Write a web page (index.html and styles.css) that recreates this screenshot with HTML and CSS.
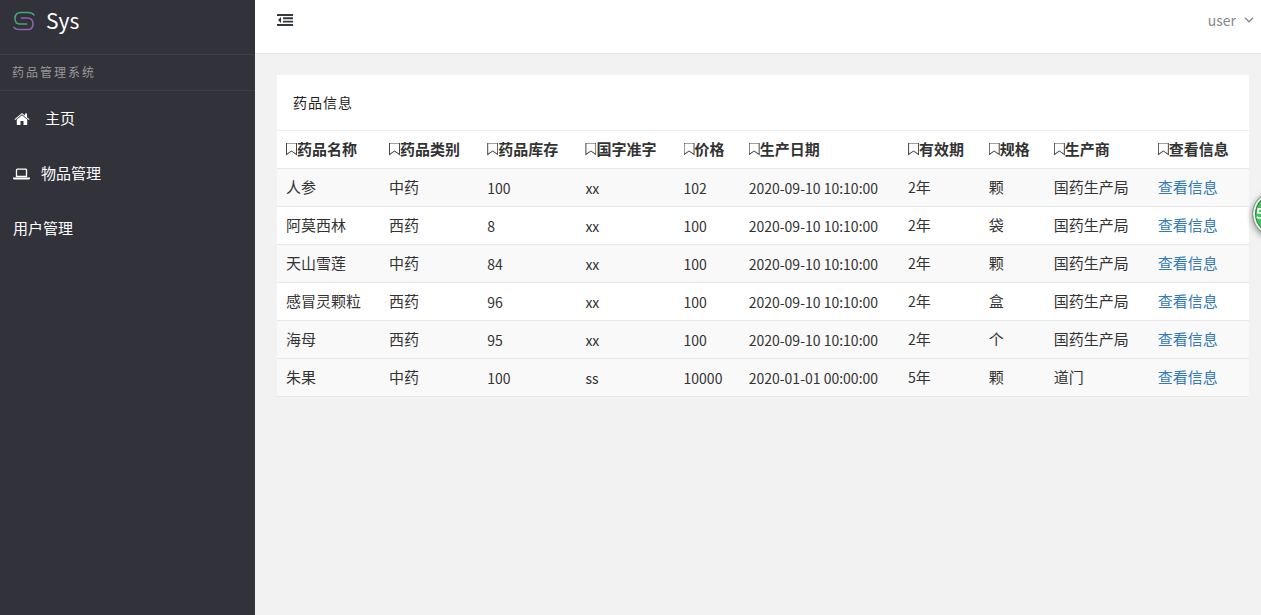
FILE: index.html
```html
<!DOCTYPE html>
<html lang="zh-CN">
<head>
<meta charset="utf-8">
<title>药品管理系统</title>
<link rel="stylesheet" href="styles.css">
</head>
<body>
<div class="app">
  <aside class="sidebar">
    <a class="brand" href="#">
      <svg class="brand-logo" viewBox="0 0 22 20" fill="none" stroke-width="1.600" stroke-linecap="round" aria-hidden="true">
        <path stroke="#46a57a" d="M21 4Q19 1.500 15 1.500H8Q2 1.500 2 7.500T8 13H13.500"/>
        <path stroke="#8b62b4" d="M8.500 7H14Q20 7 20 13T14 18.500H6Q2.500 18.500 1 16.500"/>
      </svg>
      <span>Sys</span>
    </a>
    <div class="side-title">药品管理系统</div>
    <nav class="menu">
      <a class="menu-item" href="#">
        <svg class="icon-home" viewBox="0 0 16 14" fill="#fff" aria-hidden="true"><path d="M8 3.200 13.200 7.500V12.500Q13.200 13 12.700 13H9.500V9H6.500V13H3.300Q2.800 13 2.800 12.500V7.500Z"/><path d="M8 1 11 3.500V1.500H13V5.200L15.500 7.300 14.800 8 8 2.300 1.200 8 .5 7.300Z"/></svg>
        <span>主页</span>
      </a>
      <a class="menu-item" href="#">
        <svg class="icon-laptop" viewBox="0 0 17 12" aria-hidden="true"><path fill="none" stroke="#fff" stroke-width="1.300" d="M3.500 8.500V2Q3.500 1.200 4.300 1.200H12.700Q13.500 1.200 13.500 2V8.500Z"/><path fill="#fff" d="M0 9.500H17V10.500Q17 11.500 15.500 11.500H1.500Q0 11.500 0 10.500Z"/></svg>
        <span>物品管理</span>
      </a>
      <a class="menu-item" href="#"><span>用户管理</span></a>
    </nav>
  </aside>
  <div class="page">
    <header class="topbar">
      <button class="toggle" type="button" aria-label="收起菜单">
        <svg viewBox="0 0 16 12" fill="#333a3f" aria-hidden="true"><path d="M0 0H16V2H0ZM6 3.300H16V5.200H6ZM6 6.700H16V8.600H6ZM0 10H16V12H0ZM4 3V9L1 6Z"/></svg>
      </button>
      <button class="user" type="button"><span>user</span>
        <svg viewBox="0 0 10 6" fill="none" stroke="#888" stroke-width="1.300" aria-hidden="true"><path d="M1 .8 5 4.800 9 .8"/></svg>
      </button>
    </header>
    <main class="content">
      <section class="panel">
        <h1 class="panel-title">药品信息</h1>
        <table class="drugs">
          <colgroup><col class="c-name"><col class="c-mid"><col class="c-mid"><col class="c-mid"><col class="c-small"><col class="c-date"><col class="c-term"><col class="c-small"><col class="c-maker"><col></colgroup>
          <thead>
            <tr>
              <th><i class="mark"></i>药品名称</th><th><i class="mark"></i>药品类别</th><th><i class="mark"></i>药品库存</th><th><i class="mark"></i>国字准字</th><th><i class="mark"></i>价格</th><th><i class="mark"></i>生产日期</th><th><i class="mark"></i>有效期</th><th><i class="mark"></i>规格</th><th><i class="mark"></i>生产商</th><th><i class="mark"></i>查看信息</th>
            </tr>
          </thead>
          <tbody>
            <tr class="shade"><td>人参</td><td>中药</td><td class="num">100</td><td class="num">xx</td><td class="num">102</td><td class="num">2020-09-10 10:10:00</td><td><span class="num">2</span>年</td><td>颗</td><td>国药生产局</td><td><a href="#">查看信息</a></td></tr>
            <tr><td>阿莫西林</td><td>西药</td><td class="num">8</td><td class="num">xx</td><td class="num">100</td><td class="num">2020-09-10 10:10:00</td><td><span class="num">2</span>年</td><td>袋</td><td>国药生产局</td><td><a href="#">查看信息</a></td></tr>
            <tr class="shade"><td>天山雪莲</td><td>中药</td><td class="num">84</td><td class="num">xx</td><td class="num">100</td><td class="num">2020-09-10 10:10:00</td><td><span class="num">2</span>年</td><td>颗</td><td>国药生产局</td><td><a href="#">查看信息</a></td></tr>
            <tr><td>感冒灵颗粒</td><td>西药</td><td class="num">96</td><td class="num">xx</td><td class="num">100</td><td class="num">2020-09-10 10:10:00</td><td><span class="num">2</span>年</td><td>盒</td><td>国药生产局</td><td><a href="#">查看信息</a></td></tr>
            <tr class="shade"><td>海母</td><td>西药</td><td class="num">95</td><td class="num">xx</td><td class="num">100</td><td class="num">2020-09-10 10:10:00</td><td><span class="num">2</span>年</td><td>个</td><td>国药生产局</td><td><a href="#">查看信息</a></td></tr>
            <tr class="shade"><td>朱果</td><td>中药</td><td class="num">100</td><td class="num">ss</td><td class="num">10000</td><td class="num">2020-01-01 00:00:00</td><td><span class="num">5</span>年</td><td>颗</td><td>道门</td><td><a href="#">查看信息</a></td></tr>
          </tbody>
        </table>
      </section>
    </main>
  </div>
</div>
<div class="float-ball">5</div>
</body>
</html>
```
FILE: styles.css
```css
* { box-sizing: border-box; }
body {
  margin: 0;
  overflow: hidden;
  background: #f2f2f2;
  color: #333;
  font-family: "Noto Sans CJK SC", sans-serif;
  font-size: 15px;
  line-height: 22px;
}
a { text-decoration: none; color: #337ab7; }
button { border: 0; padding: 0; background: none; font: inherit; cursor: pointer; }
svg { display: block; flex: none; }

.app { display: flex; min-height: 100vh; }
.sidebar { flex: none; width: 255px; background: #32323a; }
.brand {
  display: flex;
  align-items: center;
  gap: 11px;
  height: 54px;
  padding: 0 13px 12px;
  color: #fff;
  font-size: 21px;
}
.brand span { padding-bottom: 2px; }
.brand-logo { width: 22px; height: 20px; }
.side-title {
  padding: 6px 12px 8px;
  border-top: 1px solid #3e3e46;
  border-bottom: 1px solid #3e3e46;
  color: #999;
  font-size: 12px;
  line-height: 21px;
  letter-spacing: 2px;
}
.menu-item {
  display: flex;
  align-items: center;
  height: 55px;
  padding: 0 13px;
  color: #fff;
}
.menu-item span { padding-bottom: 2px; }
.icon-home { width: 16px; height: 14px; margin: 0 15px 0 1px; }
.icon-laptop { width: 17px; height: 12px; margin-right: 11px; }

.page { flex: 1; min-width: 0; }
.topbar {
  display: flex;
  justify-content: space-between;
  align-items: center;
  height: 54px;
  padding: 0 7px 13px 22px;
  border-bottom: 1px solid #e4e4e4;
  background: #fff;
}
.toggle svg { width: 16px; height: 12px; }
.user { display: flex; align-items: center; gap: 8px; color: #888; font-size: 14px; }
.user svg { width: 10px; height: 6px; }

.content { padding: 21px 12px 21px 22px; }
.panel { background: #fff; }
.panel-title {
  margin: 0;
  padding: 16px;
  font-size: 14px;
  font-weight: 400;
  line-height: 23px;
  letter-spacing: 1px;
  color: #222;
}
.drugs { width: 100%; table-layout: fixed; border-collapse: collapse; border-top: 1px solid #eee; }
.c-name { width: 10.6%; }
.c-mid { width: 10.1%; }
.c-small { width: 6.7%; }
.c-date { width: 16.4%; }
.c-term { width: 8.3%; }
.c-maker { width: 10.7%; }
.drugs th, .drugs td {
  height: 38px;
  padding: 0 0 2px 9px;
  border-bottom: 1px solid #e7e7e7;
  text-align: left;
  white-space: nowrap;
}
.drugs td.num { padding-bottom: 0; }
.drugs .num { font-size: 14px; }
.shade { background: #f9f9f9; }
.mark {
  display: inline-block;
  width: 11px;
  height: 13px;
  vertical-align: -1px;
  background: #444;
  clip-path: polygon(0 0, 100% 0, 100% 100%, 50% 70%, 0 100%, 0 0, 1px 1px, 1px 11px, 50% 8px, 10px 11px, 10px 1px, 1px 1px);
}

.float-ball {
  position: fixed;
  top: 191px;
  right: -37px;
  width: 46px;
  height: 46px;
  padding-left: 3px;
  border: 1px solid #999;
  border-radius: 50%;
  background: #3fc45c;
  box-shadow: inset 0 0 0 2px #eee, inset 0 0 0 3px #278342, 0 2px 6px rgba(0, 0, 0, .4);
  color: #fff;
  font-size: 14px;
  font-weight: 700;
  line-height: 42px;
}
```
